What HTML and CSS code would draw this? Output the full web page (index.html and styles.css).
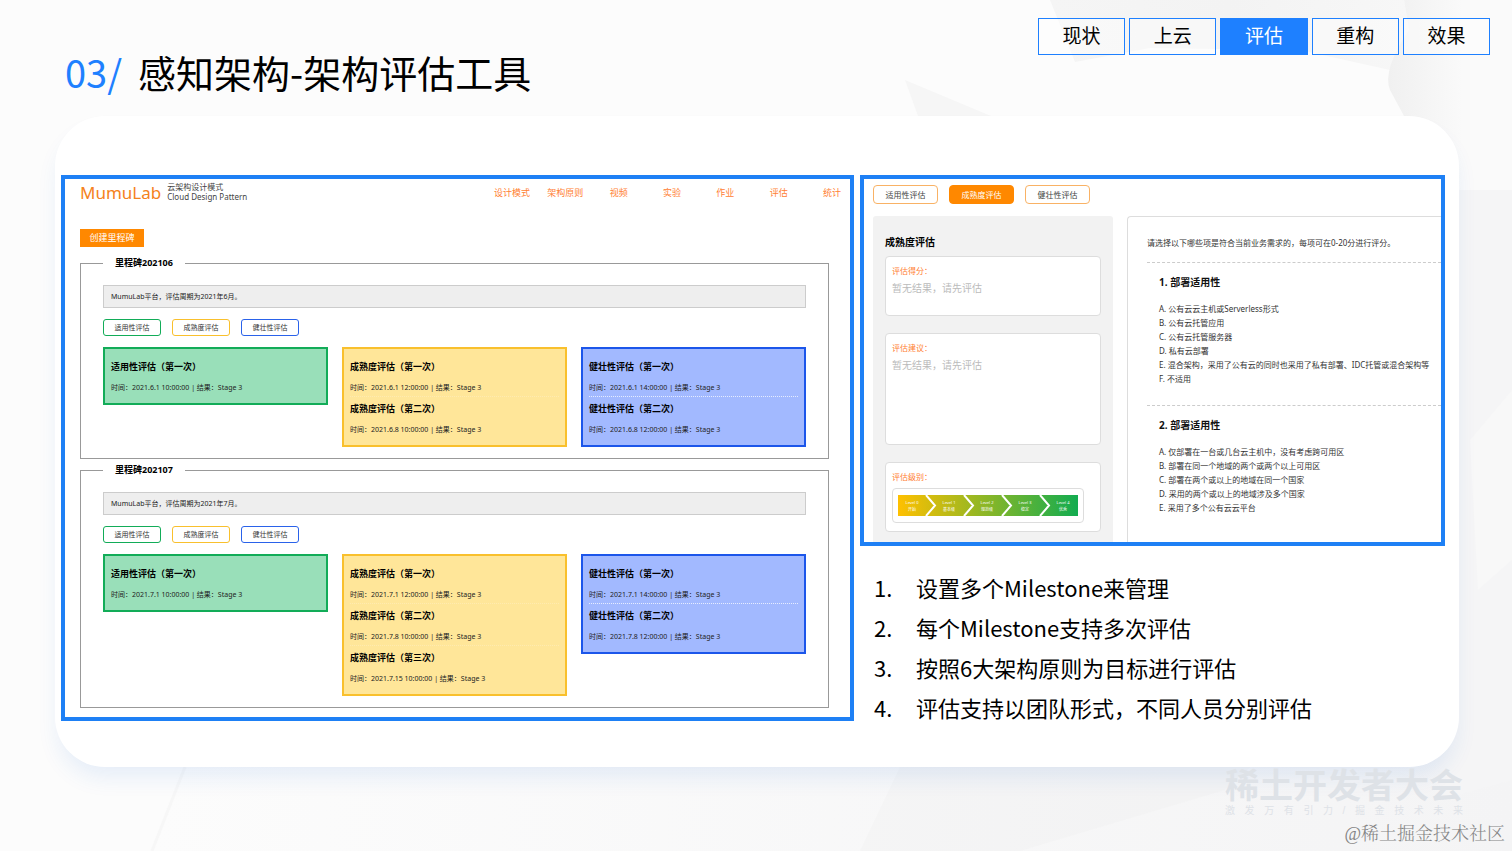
FILE: index.html
```html
<!DOCTYPE html>
<html lang="zh-CN">
<head>
<meta charset="utf-8">
<title>感知架构-架构评估工具</title>
<link rel="stylesheet" href="styles.css">
</head>
<body>
<svg class="backdrop" viewBox="0 0 1512 851" preserveAspectRatio="none" aria-hidden="true">
  <defs>
    <linearGradient id="fadeTop" x1="0" y1="0" x2="1" y2="0"><stop offset="0" stop-color="#f5f5f5"/><stop offset=".5" stop-color="#f3f3f3"/><stop offset="1" stop-color="#f7f7f7"/></linearGradient>
    <linearGradient id="fadeSide" x1="0" y1="0" x2="1" y2="0"><stop offset="0" stop-color="#f0f0f0"/><stop offset=".6" stop-color="#fafafa"/><stop offset="1" stop-color="#fafafa"/></linearGradient>
    <linearGradient id="fadeLow" x1="0" y1="0" x2="1" y2="0"><stop offset="0" stop-color="#fcfcfc"/><stop offset="1" stop-color="#f4f4f5"/></linearGradient>
  </defs>
  <path fill="url(#fadeLow)" d="M180 767 L1512 500 L1512 851 L150 851 Z"/>
  <path fill="#f5f5f6" d="M1440 190 L1512 180 L1512 780 L1440 800 Z"/>
  <path fill="#f8f8f8" d="M1512 390 L1470 440 L1478 590 L1512 560 Z"/>
  <path fill="url(#fadeTop)" d="M1050 0 H1404 L1409 30 L1390 70 L1300 50 L1150 48 L1075 62 Z"/>
  <path fill="url(#fadeSide)" d="M1404 0 L1409 30 Q1382 70 1390 90 L1404 116 Q1450 125 1458 190 L1512 190 V0 Z"/>
  <path fill="#f6f6f6" d="M905 80 L991 116 H918 Z"/>
  <path fill="none" stroke="#f7f7f7" stroke-width="3" d="M185 767 L152 851"/>
  <path fill="#efeff0" d="M1020 851 L1225 790 L1250 767 H900 L860 851 Z" opacity=".4"/>
</svg>

<header class="top">
  <h1 class="title"><span class="title-no">03/</span>感知架构-架构评估工具</h1>
  <nav class="steps" aria-label="章节">
    <button class="step" type="button">现状</button>
    <button class="step" type="button">上云</button>
    <button class="step step-on" type="button">评估</button>
    <button class="step" type="button">重构</button>
    <button class="step" type="button">效果</button>
  </nav>
</header>

<main class="sheet">
  <section class="frame lab">
    <div class="lab-head">
      <span class="lab-logo">MumuLab</span>
      <p class="lab-sub">云架构设计模式<br>Cloud Design Pattern</p>
      <nav class="lab-nav">
        <a href="#">设计模式</a><a href="#">架构原则</a><a href="#">视频</a><a href="#">实验</a><a href="#">作业</a><a href="#">评估</a><a href="#">统计</a>
      </nav>
    </div>
    <div class="lab-body">
      <button class="create" type="button">创建里程碑</button>

      <fieldset class="stone">
        <legend>里程碑202106</legend>
        <p class="desc">MumuLab平台，评估周期为2021年6月。</p>
        <div class="tags">
          <button class="tag green" type="button">适用性评估</button>
          <button class="tag amber" type="button">成熟度评估</button>
          <button class="tag blue" type="button">健壮性评估</button>
        </div>
        <div class="cards">
          <div class="card green">
            <article class="run"><h3>适用性评估（第一次）</h3><p>时间：2021.6.1 10:00:00 | 结果：Stage 3</p></article>
          </div>
          <div class="card amber">
            <article class="run"><h3>成熟度评估（第一次）</h3><p>时间：2021.6.1 12:00:00 | 结果：Stage 3</p></article>
            <article class="run"><h3>成熟度评估（第二次）</h3><p>时间：2021.6.8 10:00:00 | 结果：Stage 3</p></article>
          </div>
          <div class="card blue">
            <article class="run"><h3>健壮性评估（第一次）</h3><p>时间：2021.6.1 14:00:00 | 结果：Stage 3</p></article>
            <article class="run"><h3>健壮性评估（第二次）</h3><p>时间：2021.6.8 12:00:00 | 结果：Stage 3</p></article>
          </div>
        </div>
      </fieldset>

      <fieldset class="stone">
        <legend>里程碑202107</legend>
        <p class="desc">MumuLab平台，评估周期为2021年7月。</p>
        <div class="tags">
          <button class="tag green" type="button">适用性评估</button>
          <button class="tag amber" type="button">成熟度评估</button>
          <button class="tag blue" type="button">健壮性评估</button>
        </div>
        <div class="cards">
          <div class="card green">
            <article class="run"><h3>适用性评估（第一次）</h3><p>时间：2021.7.1 10:00:00 | 结果：Stage 3</p></article>
          </div>
          <div class="card amber">
            <article class="run"><h3>成熟度评估（第一次）</h3><p>时间：2021.7.1 12:00:00 | 结果：Stage 3</p></article>
            <article class="run"><h3>成熟度评估（第二次）</h3><p>时间：2021.7.8 10:00:00 | 结果：Stage 3</p></article>
            <article class="run"><h3>成熟度评估（第三次）</h3><p>时间：2021.7.15 10:00:00 | 结果：Stage 3</p></article>
          </div>
          <div class="card blue">
            <article class="run"><h3>健壮性评估（第一次）</h3><p>时间：2021.7.1 14:00:00 | 结果：Stage 3</p></article>
            <article class="run"><h3>健壮性评估（第二次）</h3><p>时间：2021.7.8 12:00:00 | 结果：Stage 3</p></article>
          </div>
        </div>
      </fieldset>
    </div>
  </section>

  <div class="side">
    <section class="frame survey">
      <nav class="kinds">
        <button class="kind" type="button">适用性评估</button>
        <button class="kind kind-on" type="button">成熟度评估</button>
        <button class="kind" type="button">健壮性评估</button>
      </nav>
      <div class="survey-body">
        <div class="result">
          <h2>成熟度评估</h2>
          <div class="box box-score"><h4>评估得分：</h4><p>暂无结果，请先评估</p></div>
          <div class="box box-advice"><h4>评估建议：</h4><p>暂无结果，请先评估</p></div>
          <div class="box box-level"><h4>评估级别：</h4>
            <div class="scale">
              <ol class="levels">
                <li>Level 0<br>开始</li>
                <li>Level 1<br>基本级</li>
                <li>Level 2<br>规范级</li>
                <li>Level 3<br>稳定</li>
                <li>Level 4<br>优秀</li>
              </ol>
              <svg class="chevrons" viewBox="0 0 180 21" preserveAspectRatio="none" aria-hidden="true"><path d="M28 0 L37 10.5 L28 21 M66 0 L75 10.5 L66 21 M104 0 L113 10.5 L104 21 M142 0 L151 10.5 L142 21"/></svg>
            </div>
          </div>
        </div>
        <div class="questions">
          <p class="hint">请选择以下哪些项是符合当前业务需求的，每项可在0-20分进行评分。</p>
          <div class="question">
            <h3>1. 部署适用性</h3>
            <ul>
              <li>A. 公有云云主机或Serverless形式</li>
              <li>B. 公有云托管应用</li>
              <li>C. 公有云托管服务器</li>
              <li>D. 私有云部署</li>
              <li>E. 混合架构，采用了公有云的同时也采用了私有部署、IDC托管或混合架构等</li>
              <li>F. 不适用</li>
            </ul>
          </div>
          <div class="question">
            <h3>2. 部署适用性</h3>
            <ul>
              <li>A. 仅部署在一台或几台云主机中，没有考虑跨可用区</li>
              <li>B. 部署在同一个地域的两个或两个以上可用区</li>
              <li>C. 部署在两个或以上的地域在同一个国家</li>
              <li>D. 采用的两个或以上的地域涉及多个国家</li>
              <li>E. 采用了多个公有云云平台</li>
            </ul>
          </div>
        </div>
      </div>
    </section>

    <ol class="points">
      <li><span class="no">1.</span>设置多个Milestone来管理</li>
      <li><span class="no">2.</span>每个Milestone支持多次评估</li>
      <li><span class="no">3.</span>按照6大架构原则为目标进行评估</li>
      <li><span class="no">4.</span>评估支持以团队形式，不同人员分别评估</li>
    </ol>
  </div>
</main>

<footer class="foot">
  <div class="brand">
    <p class="brand-name">稀土开发者大会</p>
    <p class="brand-line"><span>激</span><span>发</span><span>万</span><span>有</span><span>引</span><span>力</span><span>/</span><span>掘</span><span>金</span><span>技</span><span>术</span><span>未</span><span>来</span></p>
  </div>
  <p class="credit">@稀土掘金技术社区</p>
</footer>
</body>
</html>
```

FILE: styles.css
```css
* { box-sizing: border-box; }

body {
  margin: 0;
  min-height: 100vh;
  position: relative;
  background: #fcfcfc;
  color: #000;
  font-family: "Noto Sans CJK SC", sans-serif;
}

h1, h2, h3, h4, p, ul, ol { margin: 0; padding: 0; font-weight: inherit; }
ul, ol { list-style: none; }
button { font: inherit; color: inherit; padding: 0; }
a { color: inherit; text-decoration: none; }

.backdrop { position: absolute; inset: 0; width: 100%; height: 100%; z-index: -1; }

/* Page header */
.top {
  display: flex;
  justify-content: space-between;
  align-items: flex-start;
  min-height: 116px;
  padding: 18px 22px 0 65px;
}
.title { display: flex; gap: 16px; padding-top: 26px; font-size: 38px; line-height: 56px; }
.title-no { color: #1e80ff; }
.steps { display: grid; grid-template-columns: repeat(5, 1fr); gap: 4px; width: 452px; }
.step { height: 37px; padding-bottom: 3px; border: 1px solid #1e80ff; background: rgba(255, 255, 255, .4); font-size: 19px; line-height: 28px; }
.step-on { background: #1e80ff; color: #fff; }

/* White sheet */
.sheet {
  display: grid;
  grid-template-columns: 793fr 585fr;
  gap: 6px;
  align-items: start;
  margin: 0 53px 0 55px;
  padding: 59px 14px 40px 6px;
  border-radius: 50px;
  background: #fff;
  box-shadow: 0 14px 22px -4px rgba(30, 110, 220, .1);
}
.frame {
  border: 4px solid #1e80f5;
  background: #fff;
  overflow: hidden;
  font-family: "Noto Sans", "Noto Sans CJK SC", sans-serif;
}

/* Milestone screen */
.lab-head { display: flex; align-items: flex-start; height: 30px; padding: 2px 0 0 15px; }
.lab-logo { color: #f58220; font-size: 17px; line-height: 24px; }
.lab-sub { margin-left: 6px; padding-top: 1px; color: #444; font-size: 8px; line-height: 10px; }
.lab-nav { display: flex; justify-content: space-between; width: 356px; margin-left: auto; padding-top: 6px; color: #ff8033; font-size: 9px; line-height: 12px; }
.lab-nav a { min-width: 36px; text-align: center; }
.lab-body { padding: 20px 21px 9px 15px; }
.create { display: block; width: 64px; height: 18px; border: 0; background: #ff8800; color: #fff; font-size: 9px; line-height: 18px; }

.stone { min-width: 0; margin: 10px 0 0; padding: 16px 22px 11px; border: 1px solid #999; }
.stone + .stone { margin-top: 5px; }
.stone legend { padding: 0 12px; font-size: 9px; line-height: 12px; font-weight: 700; }
.desc { padding: 0 7px; border: 1px solid #ccc; background: #eee; color: #222; font-size: 7px; line-height: 21px; }
.tags { display: flex; gap: 11px; margin: 11px 0; }
.tag { width: 58px; height: 17px; border: 1px solid; border-radius: 3px; background: #fff; color: #333; font-size: 7px; line-height: 14px; }
.tag.green { border-color: #12ac58; }
.tag.amber { border-color: #f9c02d; }
.tag.blue { border-color: #2a62ea; }

.cards { display: grid; grid-template-columns: repeat(3, 1fr); gap: 14px; align-items: start; }
.card { padding: 6px; border: 2px solid; }
.card.green { border-color: #12ac58; background: #99dfb9; }
.card.amber { border-color: #f9c02d; background: #ffe699; }
.card.blue { border-color: #1c56ea; background: #a2b9ff; }
.run { padding: 6px 0 2px; border-bottom: 1px dotted transparent; }
.run h3 { font-size: 9px; line-height: 12px; font-weight: 700; color: #000; }
.run p { margin-top: 9px; font-size: 7px; line-height: 12px; color: #222; white-space: nowrap; }
.blue .run:not(:last-child) { border-bottom-color: #e6ecff; }
.amber .run:not(:last-child) { border-bottom-color: #ffebb0; }

/* Assessment screen */
.survey { display: flex; flex-direction: column; height: 371px; padding: 6px 0 0 9px; }
.kinds { display: flex; gap: 11px; }
.kind { width: 65px; height: 19px; border: 1px solid #f9b265; border-radius: 4px; background: #fff; color: #444; font-size: 8px; line-height: 16px; }
.kind-on { border-color: #ff8800; background: #ff8800; color: #fff; }
.survey-body { display: grid; grid-template-columns: 240px 1fr; gap: 14px; flex: 1; min-height: 0; margin-top: 12px; }
.result { padding: 18px 12px 0; border-radius: 3px; background: #f2f2f2; }
.result h2 { font-size: 10px; line-height: 16px; font-weight: 700; }
.box { margin-top: 17px; padding: 8px 6px 0; border: 1px solid #ddd; border-radius: 4px; background: #fff; }
.box h4 { color: #ff8033; font-size: 8px; line-height: 12px; }
.box p { margin-top: 4px; color: #bbb; font-size: 10px; line-height: 14px; }
.box-score { height: 60px; margin-top: 6px; }
.box-advice { height: 112px; }
.box-level { height: 70px; }
.scale { position: relative; width: 192px; margin-top: 5px; padding: 6px 5px; border: 1px solid #ddd; border-radius: 4px; }
.levels { display: grid; grid-template-columns: 28px repeat(3, 38px) 1fr; padding: 4px 0 3px; background: linear-gradient(90deg, #ffc000, #12ac50); color: #fff; text-align: center; font-size: 4px; line-height: 7px; }
.levels li + li { padding-left: 8px; }
.chevrons { position: absolute; inset: 6px 5px; width: 180px; height: 21px; }
.chevrons path { fill: none; stroke: #fff; stroke-width: 2; }

.questions { padding: 19px 0 0 19px; border: 1px solid #ddd; border-width: 1px 0 0 1px; border-radius: 4px 0 0; color: #333; font-size: 8px; white-space: nowrap; }
.hint { line-height: 14px; padding-bottom: 12px; }
.question { height: 143px; padding: 11px 0 0 12px; border-top: 1px dashed #ccc; }
.question h3 { margin-bottom: 12px; color: #111; font-size: 10px; line-height: 16px; font-weight: 700; }
.question li { line-height: 14px; }

/* Key points */
.points { padding: 21px 0 0 14px; font-size: 22px; line-height: 40px; }
.points li { display: flex; }
.no { flex: none; width: 42px; }

/* Footer marks */
.foot { display: flex; flex-direction: column; align-items: flex-end; padding-top: 2px; }
.brand { width: 238px; margin-right: 49px; color: #dee2e7; font-family: "Liberation Sans", "Noto Sans CJK SC", sans-serif; }
.brand-name { font-size: 34px; line-height: 34px; font-weight: 700; }
.brand-line { display: flex; justify-content: space-between; font-size: 10px; line-height: 16px; }
.credit { margin: 3px 7px 0 0; color: #858585; font-size: 18px; line-height: 24px; font-weight: 300; font-family: "Liberation Serif", "Noto Serif CJK SC", "Noto Sans CJK SC", serif; }
```
